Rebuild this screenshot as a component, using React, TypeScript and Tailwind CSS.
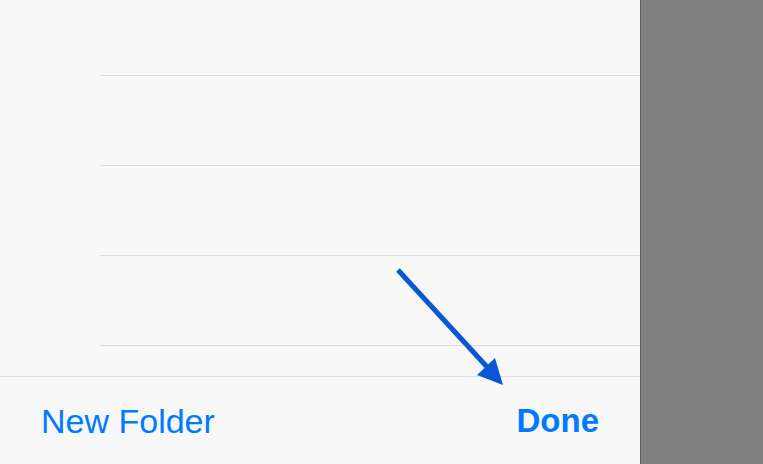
export default function App() {
  const rows = ['h-[76px]', 'h-[90px]', 'h-[90px]', 'h-[90px]']

  return (
    <div className="relative flex h-[464px] w-[763px] overflow-hidden font-['Liberation_Sans',Arial,sans-serif]">
      <div className="flex w-[640px] flex-col bg-[#f8f8f9]">
        <div className="flex flex-1 flex-col">
          {rows.map((h, i) => (
            <div key={i} className={`${h} ml-[100px] border-b border-[#dcdce0]`} />
          ))}
        </div>
        <div className="flex h-[88px] items-center justify-between border-t border-[#dcdce0] px-[41px]">
          <button className="text-[34px] leading-none text-[#007aff]">New Folder</button>
          <button className="text-[33px] font-bold leading-none text-[#007aff]">Done</button>
        </div>
      </div>
      <div className="flex-1 border-l border-[#5e5e5e] bg-[#808080]" />

      {/* annotation arrow */}
      <svg className="pointer-events-none absolute left-0 top-0" width="763" height="464">
        <line x1="398" y1="270" x2="488" y2="368" stroke="#0a57d6" strokeWidth="5" />
        <polygon points="477,375 495,358 503,385" fill="#0a57d6" />
      </svg>
    </div>
  )
}
